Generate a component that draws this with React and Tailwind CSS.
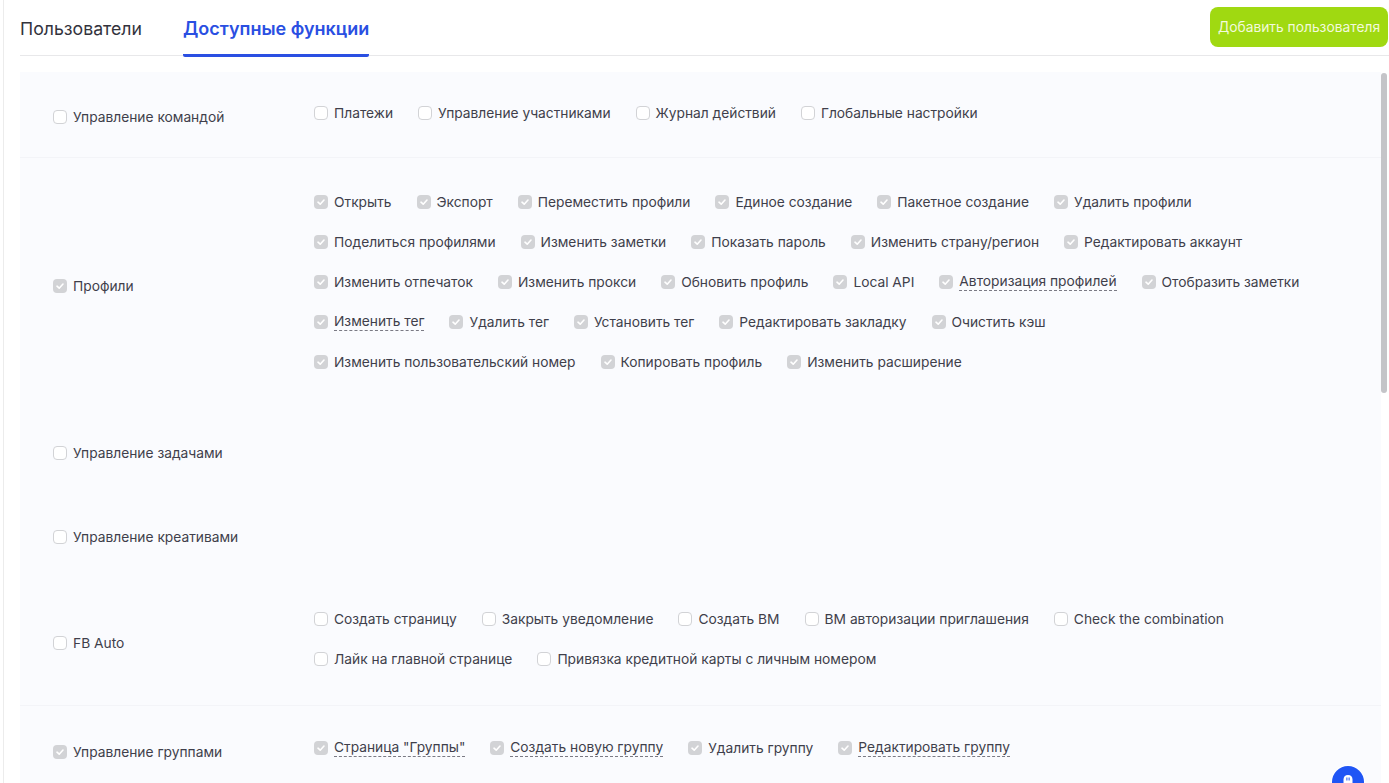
const rows = [
  { label: "Управление командой", checked: false, h: "h-[86px]", leftPad: "pt-[6px]", pad: "pt-[21px]", items: [["Платежи"], ["Управление участниками"], ["Журнал действий"], ["Глобальные настройки"]], border: true },
  { label: "Профили", checked: true, h: "h-[256px]", leftPad: "", pad: "pt-[24px]", items: [
    ["Открыть"], ["Экспорт"], ["Переместить профили"], ["Единое создание"], ["Пакетное создание"], ["Удалить профили"],
    ["Поделиться профилями"], ["Изменить заметки"], ["Показать пароль"], ["Изменить страну/регион"], ["Редактировать аккаунт"],
    ["Изменить отпечаток"], ["Изменить прокси"], ["Обновить профиль"], ["Local API"], ["Авторизация профилей", true], ["Отобразить заметки"],
    ["Изменить тег", true], ["Удалить тег"], ["Установить тег"], ["Редактировать закладку"], ["Очистить кэш"],
    ["Изменить пользовательский номер"], ["Копировать профиль"], ["Изменить расширение"],
  ] },
  { label: "Управление задачами", checked: false, h: "h-[78px]", leftPad: "", pad: "", items: [] },
  { label: "Управление креативами", checked: false, h: "h-[90px]", leftPad: "", pad: "", items: [] },
  { label: "FB Auto", checked: false, h: "h-[124px]", leftPad: "pb-[1px]", pad: "pt-[17px]", border: true, items: [
    ["Создать страницу"], ["Закрыть уведомление"], ["Создать BM"], ["BM авторизации приглашения"], ["Check the combination"],
    ["Лайк на главной странице"], ["Привязка кредитной карты с личным номером"],
  ] },
  { label: "Управление группами", checked: true, h: "h-[92px]", leftPad: "", pad: "pt-[22px]", items: [["Страница \"Группы\"", true], ["Создать новую группу", true], ["Удалить группу"], ["Редактировать группу", true]] },
];

function Box({ checked }) {
  if (checked) {
    return (
      <span className="w-[14px] h-[14px] rounded-[4px] bg-[#d2d3d6] flex items-center justify-center shrink-0">
        <svg width="10" height="10" viewBox="0 0 10 10" fill="none">
          <path d="M2 5.2 L4.2 7.2 L8 3" stroke="#ffffff" strokeWidth="1.6" strokeLinecap="round" strokeLinejoin="round" />
        </svg>
      </span>
    );
  }
  return <span className="w-[14px] h-[14px] rounded-[4px] bg-white border border-[#d2d3d6] shrink-0" />;
}

function Item({ text, dashed, checked }) {
  return (
    <div className="h-10 flex items-center gap-[6px]">
      <Box checked={checked} />
      <span className={dashed ? "text-[#3f3f4b] leading-[17px] border-b border-dashed border-[#7a7a84]" : "text-[#3f3f4b]"}>{text}</span>
    </div>
  );
}

export default function App() {
  return (
    <div className="relative h-screen overflow-hidden bg-white text-[13.78px] font-['Inter',sans-serif]">
      <div className="h-full ml-[3px] border-l border-[#ececec] pl-4">
        <div className="flex items-start justify-between h-[56px] border-b border-[#e8e8ea]">
          <div className="flex gap-[41px]">
            <div className="h-[56px] flex items-center pt-[2px] text-[17.7px] leading-none text-[#33333d]">Пользователи</div>
            <div className="h-[57px] flex items-center pt-[3px] text-[18px] font-semibold leading-none text-[#2a4fe2] border-b-[3px] border-[#2a4fe2] rounded-b-[2px]">Доступные функции</div>
          </div>
          <button className="mt-[7px] w-[178px] h-10 mr-px rounded-lg bg-[#a0d911] text-[#f2fadc] text-[13.8px] whitespace-nowrap flex items-center justify-center">Добавить пользователя</button>
        </div>
        <div className="mt-4 mr-2 bg-[#fafbfe]">
          {rows.map((r) => (
            <div key={r.label} className={`flex ${r.h} ${r.border ? "border-b border-[#f3f4f8]" : ""}`}>
              <div className={`w-[294px] shrink-0 pl-[33px] flex items-center ${r.leftPad}`}>
                <div className="flex items-center gap-[6px]">
                  <Box checked={r.checked} />
                  <span className="text-[#3f3f4b]">{r.label}</span>
                </div>
              </div>
              <div className={`w-[1000px] flex flex-wrap content-start gap-x-[25px] ${r.pad}`}>
                {r.items.map(([t, d]) => (
                  <Item key={t} text={t} dashed={d} checked={r.checked} />
                ))}
              </div>
            </div>
          ))}
        </div>
      </div>
      <div className="absolute left-[1381px] top-[73px] w-[6px] h-[320px] rounded-[3px] bg-[#c4c4c8]" />
      <div className="absolute left-[1332px] top-[766px] w-8 h-8 rounded-full bg-[#1f55f5] ring-1 ring-white flex items-center justify-center">
        <svg width="18" height="18" viewBox="0 0 18 18" fill="none">
          <path d="M9 2 C6 2 4.5 4 4.5 6.5 V11 H13.5 V6.5 C13.5 4 12 2 9 2 Z" fill="#ffffff" />
          <rect x="7.4" y="4.5" width="1" height="3" fill="#1f55f5" />
          <rect x="9.6" y="4.5" width="1" height="3" fill="#1f55f5" />
        </svg>
      </div>
    </div>
  );
}
